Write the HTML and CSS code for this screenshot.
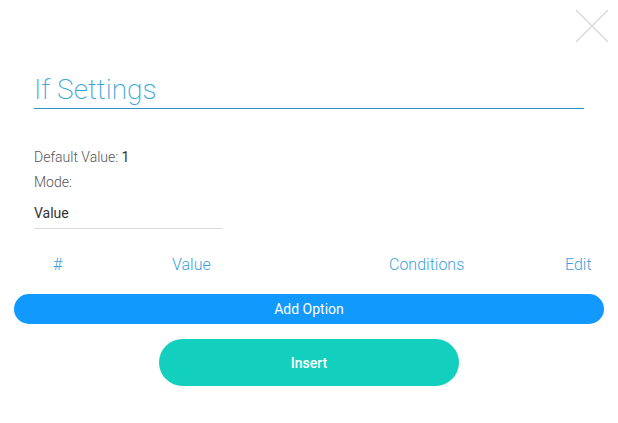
FILE: index.html
```html
<!DOCTYPE html>
<html>
<head>
<meta charset="utf-8">
<link rel="stylesheet" href="styles.css">
</head>
<body>
<div class="modal">
  <button class="close" aria-label="Close">
    <svg width="34" height="34" viewBox="0 0 34 34"><path d="M1 1 L33 33 M33 1 L1 33" stroke="#d6d6d6" stroke-width="1.2" fill="none"/></svg>
  </button>
  <h1 class="title">If Settings</h1>
  <div class="info">
    <div class="line">Default Value: <span class="val">1</span></div>
    <div class="line">Mode:</div>
  </div>
  <div class="select">Value</div>
  <div class="table-head">
    <span class="c1">#</span>
    <span class="c2">Value</span>
    <span class="c3">Conditions</span>
    <span class="c4">Edit</span>
  </div>
  <button class="add">Add Option</button>
  <div class="insert-wrap"><button class="insert">Insert</button></div>
</div>
</body>
</html>
```
FILE: styles.css
```css
html, body { margin: 0; padding: 0; background: #fff; }
body { font-family: Roboto, "Noto Sans", sans-serif; width: 618px; height: 423px; overflow: hidden; }
.modal { position: relative; display: flow-root; padding: 0 14px; }
.close { position: absolute; top: 9px; right: 9px; width: 34px; height: 34px; padding: 0; border: 0; background: none; }
.close svg { display: block; }
.title {
  margin: 72px 20px 0 20px;
  font-family: Roboto, sans-serif;
  font-weight: 200; font-size: 28px; line-height: 36px;
  color: #3ba8d8;
  padding-bottom: 0;
  border-bottom: 1px solid #2a96bf;
}
.info { margin: 36px 0 0 20px; color: #555; font-size: 14px; font-weight: 300; }
.line { line-height: 25px; }
.val { color: #333; font-weight: 400; }
.select { margin: 6px 0 0 20px; width: 189px; font-size: 14px; color: #333; line-height: 24px; padding-bottom: 3px; border-bottom: 1px solid #dcdcdc; }
.table-head { position: relative; height: 30px; margin-top: 22px; font-size: 16px; color: #3ea0e0; font-weight: 300; }
.table-head span { position: absolute; top: 4px; }
.c1 { left: 39px; }
.c2 { left: 158px; }
.c3 { left: 375px; }
.c4 { left: 551px; }
.add { display: block; width: 590px; height: 30px; margin-top: 13px; border: 0; border-radius: 15px; background: #1199fe; color: #fff; font-family: Roboto, sans-serif; font-size: 14px; }
.insert-wrap { display: flex; justify-content: center; margin-top: 15px; }
.insert { width: 300px; height: 47px; border: 0; border-radius: 24px; background: #13cfbd; color: #fff; font-family: Roboto, sans-serif; font-size: 14px; font-weight: 500; }
```
